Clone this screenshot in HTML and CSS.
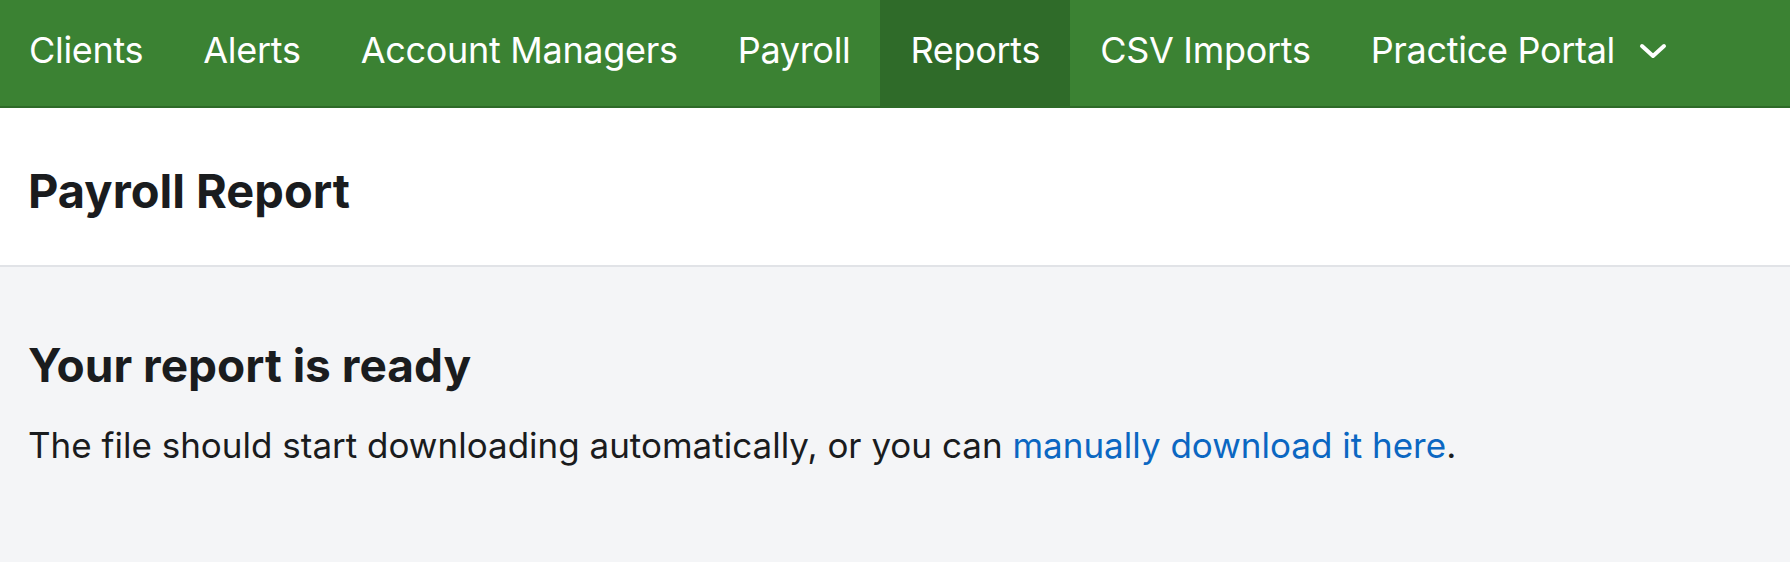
FILE: index.html
```html
<!DOCTYPE html>
<html>
<head>
<meta charset="utf-8">
<link rel="stylesheet" href="styles.css">
</head>
<body>
<nav class="nav">
  <a class="nav-item">Clients</a>
  <a class="nav-item">Alerts</a>
  <a class="nav-item">Account Managers</a>
  <a class="nav-item">Payroll</a>
  <a class="nav-item active">Reports</a>
  <a class="nav-item">CSV Imports</a>
  <a class="nav-item">Practice Portal <svg class="chev" width="28" height="18" viewBox="0 0 28 18"><path d="M3 4 L14 14 L25 4" fill="none" stroke="#fff" stroke-width="4" stroke-linecap="round" stroke-linejoin="round"/></svg></a>
</nav>
<header class="page-header">
  <h1 class="page-title">Payroll Report</h1>
</header>
<main class="content">
  <h2 class="ready-title">Your report is ready</h2>
  <p class="ready-text">The file should start downloading automatically, or you can <a class="link" href="#">manually download it here</a>.</p>
</main>
</body>
</html>
```

FILE: styles.css
```css
* { box-sizing: border-box; }
html, body { margin: 0; padding: 0; }
body {
  font-family: Inter, "Liberation Sans", sans-serif;
  background: #f4f5f7;
  color: #1a1c1e;
  height: 562px;
  overflow: hidden;
}
.nav {
  display: flex;
  height: 108px;
  background: #3b8233;
  border-bottom: 2px solid #2e6a28;
}
.nav-item {
  display: flex;
  align-items: center;
  padding: 0 30px 7px;
  color: #fff;
  font-size: 36px;
  white-space: nowrap;
  letter-spacing: -0.3px;
}
.nav-item:first-child { padding-left: 29px; }
.nav-item.active { background: #2f6b29; }
.chev { margin-left: 24px; margin-top: 2px; }
.page-header {
  background: #fff;
  height: 159px;
  border-bottom: 2px solid #e1e3e7;
  display: flex;
  align-items: center;
  padding: 8px 28px 0;
}
.page-title {
  margin: 0;
  font-size: 47px;
  font-weight: 700;
  letter-spacing: 0;
}
.content { padding: 70px 28px; }
.ready-title {
  margin: 0;
  font-size: 46px;
  font-weight: 700;
  letter-spacing: 0;
}
.ready-text {
  margin: 31px 0 0;
  font-size: 35px;
}
.link { color: #0b67c2; text-decoration: none; }
```
